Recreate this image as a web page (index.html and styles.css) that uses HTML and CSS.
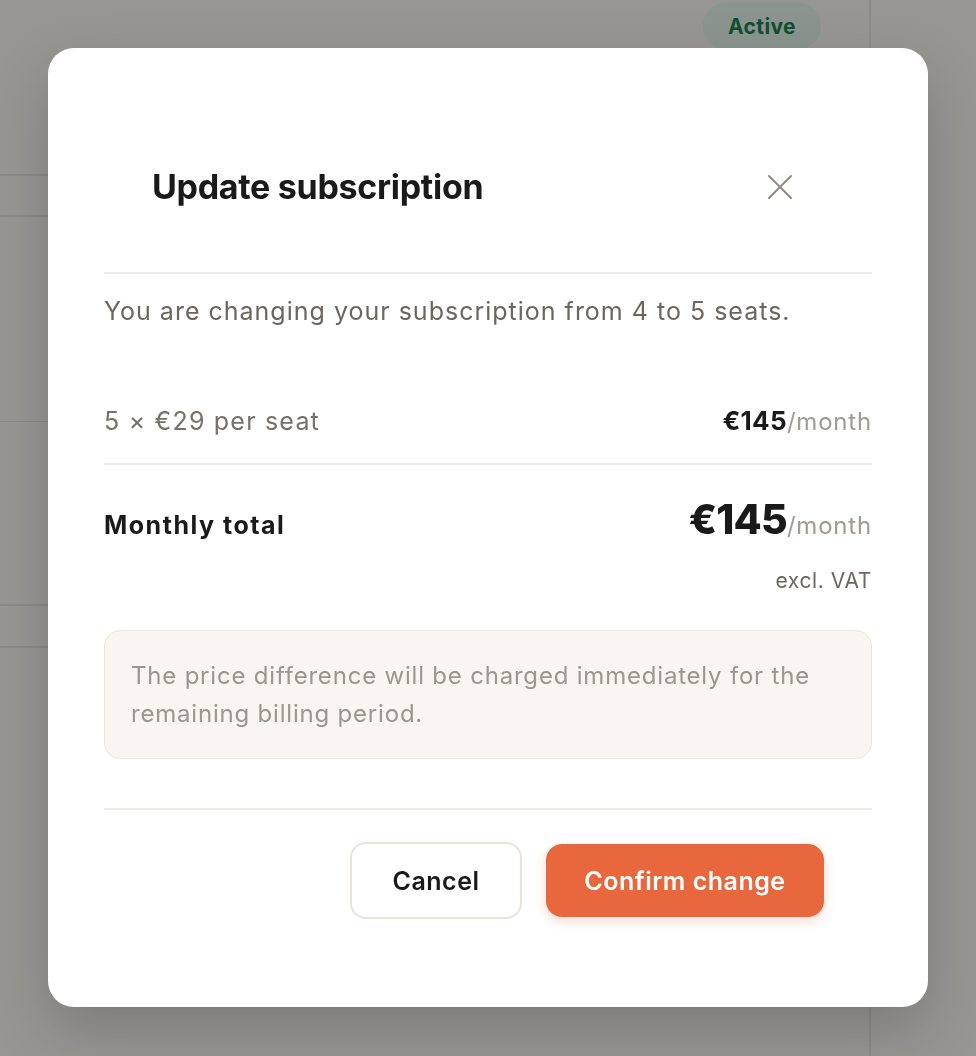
FILE: index.html
```html
<!DOCTYPE html>
<html lang="en">
<head>
<meta charset="utf-8">
<title>Update subscription</title>
<link rel="stylesheet" href="styles.css">
</head>
<body>
<div class="app">
  <div class="main">
    <div class="row row-top"><span class="badge">Active</span></div>
    <div class="row row-a"></div>
    <div class="row row-b"></div>
    <div class="row row-c"></div>
    <div class="row row-d"></div>
    <div class="row row-e"></div>
  </div>
  <div class="side"></div>
</div>
<div class="overlay">
  <div class="modal" role="dialog" aria-labelledby="dlg-title">
    <div class="modal-header">
      <h2 id="dlg-title" class="title">Update subscription</h2>
      <button class="close" aria-label="Close">
        <svg width="24" height="24" viewBox="0 0 24 24" fill="none" stroke="currentColor" stroke-width="2" stroke-linecap="round"><path d="M1 1L23 23M23 1L1 23"/></svg>
      </button>
    </div>
    <div class="modal-body">
      <p class="intro">You are changing your subscription from 4 to 5 seats.</p>
      <div class="line-item">
        <span class="li-label">5 × €29 per seat</span>
        <span class="li-price"><b>€145</b><span class="per">/month</span></span>
      </div>
      <div class="total">
        <div class="total-row">
          <span class="total-label">Monthly total</span>
          <span class="total-price"><b>€145</b><span class="per">/month</span></span>
        </div>
        <div class="vat">excl. VAT</div>
      </div>
      <div class="notice">The price difference will be charged immediately for the remaining billing period.</div>
    </div>
    <div class="modal-footer">
      <button class="btn btn-secondary">Cancel</button>
      <button class="btn btn-primary">Confirm change</button>
    </div>
  </div>
</div>
</body>
</html>
```

FILE: styles.css
```css
* { box-sizing: border-box; }
html, body { margin: 0; padding: 0; }
body {
  font-family: "Inter", "Liberation Sans", sans-serif;
  background: #f7f4f0;
  width: 976px;
  height: 1056px;
  overflow: hidden;
  color: #1a1a1a;
}
.app {
  display: flex;
  height: 1056px;
}
.main {
  width: 871px;
  border-right: 2px solid #e6e0da;
  display: flex;
  flex-direction: column;
}
.side { flex: 1; }
.row { border-bottom: 2px solid #e6e0da; }
.row-top {
  height: 176px;
  display: flex;
  justify-content: flex-end;
  align-items: flex-start;
  padding: 2px 48px 0 0;
}
.row-a { height: 41px; }
.row-b { height: 205px; border-bottom-width: 1px; }
.row-c { height: 184px; }
.row-d { height: 42px; }
.row-e { flex: 1; border-bottom: 0; }
.badge {
  display: inline-flex;
  align-items: center;
  justify-content: center;
  width: 118px;
  height: 48px;
  border-radius: 24px;
  background: #e2f1e9;
  color: #0f7a48;
  font-weight: 700;
  font-size: 21px;
  letter-spacing: 0.4px;
}

.overlay {
  position: fixed;
  inset: 0;
  background: rgba(20, 20, 20, 0.42);
  display: flex;
  align-items: flex-start;
  justify-content: center;
  padding-top: 48px;
}
.modal {
  width: 880px;
  height: 959px;
  background: #ffffff;
  border-radius: 26px;
  padding: 0 56px;
  box-shadow: 0 24px 60px rgba(0, 0, 0, 0.18);
  display: flex;
  flex-direction: column;
}
.modal-header {
  display: flex;
  align-items: center;
  justify-content: space-between;
  padding: 118px 80px 64px 48px;
  border-bottom: 2px solid #eeeae5;
}
.title {
  margin: 0;
  font-size: 34px;
  line-height: 42px;
  font-weight: 700;
  letter-spacing: -0.3px;
  color: #1a1a1a;
}
.close {
  border: 0;
  background: none;
  padding: 0;
  width: 24px;
  height: 24px;
  color: #8f8a84;
  display: flex;
}
.modal-body {
  padding-top: 19px;
}
.intro {
  margin: 0;
  font-size: 25px;
  line-height: 36px;
  letter-spacing: 1px;
  color: #6c6660;
}
.line-item {
  display: flex;
  justify-content: space-between;
  align-items: baseline;
  margin-top: 74px;
  padding-bottom: 23px;
  border-bottom: 2px solid #eeeae5;
  font-size: 25px;
  line-height: 36px;
}
.li-label { color: #77716b; letter-spacing: 1.2px; }
.li-price b { font-size: 26px; font-weight: 700; color: #1a1a1a; letter-spacing: 0.3px; }
.per { color: #a09a94; font-size: 24px; font-weight: 400; letter-spacing: 0.8px; }
.total { padding-top: 30px; }
.total-row {
  display: flex;
  justify-content: space-between;
  align-items: baseline;
}
.total-label {
  font-size: 25px;
  font-weight: 700;
  letter-spacing: 1.5px;
  color: #1a1a1a;
}
.total-price b {
  font-size: 41px;
  line-height: 48px;
  font-weight: 800;
  letter-spacing: -0.8px;
}
.total-price .per { font-size: 24px; }
.vat {
  text-align: right;
  font-size: 21px;
  line-height: 28px;
  letter-spacing: 0.6px;
  margin-top: 24px;
  color: #6c6660;
}
.notice {
  margin-top: 35px;
  background: #f9f6f2;
  border: 1px solid #ece7e1;
  border-radius: 16px;
  padding: 26px 26px 25px;
  font-size: 24px;
  line-height: 38px;
  letter-spacing: 0.8px;
  color: #9d968f;
}
.modal-footer {
  margin-top: 49px;
  border-top: 2px solid #eeeae5;
  display: flex;
  justify-content: flex-end;
  align-items: center;
  gap: 24px;
  padding: 32px 48px 0 0;
}
.btn {
  font-family: inherit;
  font-size: 25px;
  font-weight: 600;
  letter-spacing: 0.5px;
  border-radius: 16px;
  cursor: pointer;
}
.btn-secondary {
  width: 172px;
  height: 77px;
  background: #ffffff;
  border: 2px solid #e8e3db;
  color: #1a1a1a;
}
.btn-primary {
  width: 278px;
  height: 73px;
  background: #e8673c;
  border: 0;
  color: #ffffff;
  box-shadow: 0 4px 12px rgba(232, 103, 60, 0.25);
}
```
